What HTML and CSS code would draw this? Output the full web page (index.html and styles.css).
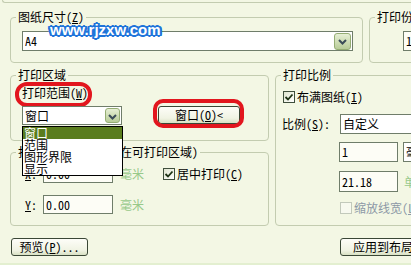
FILE: index.html
```html
<!DOCTYPE html>
<html>
<head>
  <meta charset="utf-8">
  <title>打印 - 模型</title>
  <link rel="stylesheet" href="styles.css">
</head>
<body>
  <div class="dialog">
    <div class="rim"></div>

    <div class="row row-top">
      <div class="group paper-group">
        <span class="group-title">图纸尺寸(<u>Z</u>)</span>
        <div class="combo combo-paper">
          <span class="combo-text">A4</span>
          <span class="drop-btn"><svg width="15" height="15" viewBox="0 0 15 15"><polyline points="4,6 7.5,9.5 11,6" fill="none" stroke="#3b4c58" stroke-width="2"/></svg></span>
        </div>
      </div>
      <div class="group copies-group">
        <span class="group-title">打印份数(<u>B</u>)</span>
        <div class="field copies-field">1</div>
      </div>
    </div>

    <div class="row row-mid">
      <div class="col-left">
        <div class="group area-group">
          <span class="group-title">打印区域</span>
          <div class="range-label"><span class="marked">打印范围(<u>W</u>)</span></div>
          <div class="range-row">
            <div class="combo combo-range">
              <span class="combo-text">窗口</span>
              <span class="drop-btn"><svg width="13" height="15" viewBox="0 0 13 15"><polyline points="3,6 6.5,9.5 10,6" fill="none" stroke="#3b4c58" stroke-width="2"/></svg></span>
              <ul class="drop-list">
                <li class="selected">窗口</li>
                <li>范围</li>
                <li>图形界限</li>
                <li>显示</li>
              </ul>
            </div>
            <button class="btn window-btn">窗口(<u>O</u>)&lt;</button>
          </div>
        </div>

        <div class="group offset-group">
          <span class="group-title">打印偏移(原点设置在可打印区域)</span>
          <div class="offset-row">
            <span class="axis"><u>X</u>:</span>
            <div class="field offset-field">0.00</div>
            <span class="unit">毫米</span>
            <span class="check-label center-check"><span class="check checked"><svg width="10" height="10" viewBox="0 0 10 10"><polyline points="1.5,5 4,7.5 8.5,2.5" fill="none" stroke="#1d3314" stroke-width="1.8"/></svg></span>居中打印(<u>C</u>)</span>
          </div>
          <div class="offset-row">
            <span class="axis"><u>Y</u>:</span>
            <div class="field offset-field">0.00</div>
            <span class="unit">毫米</span>
          </div>
        </div>
      </div>

      <div class="group scale-group">
        <span class="group-title">打印比例</span>
        <span class="check-label fit-check"><span class="check checked"><svg width="10" height="10" viewBox="0 0 10 10"><polyline points="1.5,5 4,7.5 8.5,2.5" fill="none" stroke="#1d3314" stroke-width="1.8"/></svg></span>布满图纸(<u>I</u>)</span>
        <div class="scale-row">
          <span class="scale-label">比例(<u>S</u>):</span>
          <div class="combo combo-scale"><span class="combo-text">自定义</span></div>
        </div>
        <div class="value-row">
          <div class="field value-field">1</div>
          <div class="combo combo-unit"><span class="combo-text">毫米</span></div>
        </div>
        <div class="value-row">
          <div class="field value-field value-tall">21.18</div>
          <span class="unit unit-label">单位(<u>N</u>)</span>
        </div>
        <span class="check-label lw-check disabled"><span class="check"></span>缩放线宽(<u>L</u>)</span>
      </div>
    </div>

    <div class="row row-bottom">
      <button class="btn preview-btn">预览(<u>P</u>)...</button>
      <button class="btn apply-btn">应用到布局(<u>T</u>)</button>
    </div>

    <div class="watermark">www.rjzxw.com</div>
  </div>
</body>
</html>
```

FILE: styles.css
```css
* {
    box-sizing: border-box;
}

body {
    margin: 0;
    background-color: #f3f7e4;
    color: #000;
    font-family: "Noto Sans CJK SC", sans-serif;
    font-size: 12px;
    line-height: 12px;
    font-feature-settings: "hwid";
}

u {
    text-decoration: underline;
    text-underline-offset: 1px;
}

.dialog {
    position: relative;
    width: 411px;
    height: 265px;
    overflow: hidden;
    border-bottom: 2px solid #e3efd0;
}

/* bottom of the group box above */
.rim {
    height: 3px;
    margin-left: 2px;
    border-left: 1px solid #c3ccb0;
    border-bottom: 1px solid #c3ccb0;
    border-bottom-left-radius: 4px;
}

.row {
    display: flex;
    padding-left: 10px;
}

.row-top {
    margin-top: 14px;
    gap: 6px;
}

.row-mid {
    margin-top: 12px;
    gap: 6px;
}

.row-bottom {
    margin-top: 12px;
    padding-left: 11px;
}

/* group boxes */
.group {
    border: 1px solid #c3ccb0;
    border-radius: 4px;
    flex-shrink: 0;
}

.group-title {
    display: block;
    width: fit-content;
    margin: -7px 0 0 5px;
    padding: 0 2px;
    background-color: #f3f7e4;
    white-space: nowrap;
}

.paper-group {
    width: 353px;
    height: 46px;
}

.copies-group {
    width: 110px;
    height: 46px;
}

.col-left {
    width: 259px;
    flex-shrink: 0;
}

.area-group {
    height: 66px;
}

.offset-group {
    margin-top: 11px;
    height: 74px;
}

.scale-group {
    width: 200px;
    height: 151px;
}

/* inputs */
.field,
.combo {
    display: flex;
    align-items: center;
    flex-shrink: 0;
    height: 20px;
    padding-left: 2px;
    border: 1px solid #6f7d6a;
    background-color: #fdfdf6;
    white-space: nowrap;
}

.combo {
    position: relative;
    background-color: #fff;
}

.drop-btn {
    display: flex;
    margin-left: auto;
    margin-right: 1px;
    border: 1px solid #95ad74;
    border-radius: 3px;
    background: linear-gradient(#e6efd4, #b8cc98);
}

.combo-paper {
    width: 331px;
    margin: 8px 0 0 11px;
}

.copies-field {
    width: 60px;
    margin: 8px 0 0 33px;
}

/* print area */
.range-label {
    margin: 6px 0 0 11px;
}

.marked {
    position: relative;
    display: inline-block;
}

.marked::after {
    content: "";
    position: absolute;
    top: -5px;
    bottom: -8px;
    left: -7px;
    right: -4px;
    border: 4px solid #e2161e;
    border-radius: 12px;
}

.range-row {
    display: flex;
    align-items: flex-start;
    margin: 7px 0 0 11px;
}

.combo-range {
    width: 100px;
    height: 19px;
}

.combo-range .drop-btn {
    height: 15px;
}

.drop-list {
    position: absolute;
    top: calc(100% + 2px);
    left: -1px;
    width: 101px;
    margin: 0;
    padding: 0;
    list-style: none;
    border: 1px solid #000;
    background-color: #fff;
    z-index: 2;
}

.drop-list li {
    height: 12px;
    padding-left: 1px;
    line-height: 12px;
}

.drop-list .selected {
    background-color: #5a7d1e;
    color: #fff;
}

/* buttons */
.btn {
    flex-shrink: 0;
    height: 18px;
    padding: 0;
    border: 1px solid #3a4736;
    border-radius: 3px;
    background: linear-gradient(#fdfdf8, #f0f3e3 70%, #d9e1c4);
    font: inherit;
    color: #000;
    white-space: nowrap;
}

.window-btn {
    position: relative;
    width: 82px;
    margin-left: 36px;
}

.window-btn::after {
    content: "";
    position: absolute;
    top: -8px;
    bottom: -5px;
    left: -6px;
    right: -5px;
    border: 4px solid #e2161e;
    border-radius: 10px;
}

.preview-btn {
    width: 77px;
}

.apply-btn {
    width: 104px;
    margin-left: 252px;
}

/* plot offset */
.offset-row {
    display: flex;
    align-items: center;
    height: 19px;
    margin-top: 6px;
    padding-left: 14px;
}

.offset-row + .offset-row {
    margin-top: 12px;
}

.axis {
    width: 18px;
}

.offset-field {
    width: 70px;
    height: 19px;
}

.unit {
    margin-left: 7px;
    color: #98c98a;
    white-space: nowrap;
}

.check-label {
    display: flex;
    align-items: center;
    white-space: nowrap;
}

.check {
    display: flex;
    align-items: center;
    justify-content: center;
    flex-shrink: 0;
    width: 12px;
    height: 12px;
    margin-right: 2px;
    border: 1px solid #3f4f3c;
    background: linear-gradient(135deg, #dfe5cf, #fff);
}

.center-check {
    margin-left: 19px;
}

/* plot scale */
.fit-check {
    margin: 10px 0 0 7px;
}

.scale-row {
    display: flex;
    align-items: center;
    margin: 11px 0 0 6px;
}

.scale-label {
    width: 58px;
    flex-shrink: 0;
    white-space: nowrap;
}

.combo-scale {
    width: 110px;
}

.value-row {
    display: flex;
    align-items: center;
    margin: 8px 0 0 63px;
}

.value-row + .value-row {
    margin-top: 9px;
}

.value-field {
    width: 59px;
}

.value-tall {
    height: 21px;
}

.combo-unit {
    width: 60px;
    margin-left: 5px;
}

.unit-label {
    margin-left: 6px;
}

.lw-check {
    margin: 10px 0 0 64px;
}

.disabled {
    color: #8d99a6;
}

.disabled .check {
    border-color: #c2c9bb;
    background: #f7f9ef;
}

/* site stamp over the screenshot */
.watermark {
    position: absolute;
    top: 21px;
    left: 50px;
    z-index: 3;
    font-family: "Liberation Sans", sans-serif;
    font-feature-settings: normal;
    font-size: 15px;
    line-height: 17px;
    font-weight: bold;
    color: #fff;
    text-shadow: 2px 0 #2074da, -2px 0 #2074da, 0 2px #2074da, 0 -2px #2074da,
        1px 1px #2074da, -1px 1px #2074da, 1px -1px #2074da, -1px -1px #2074da,
        2px 1px #2074da, -2px 1px #2074da, 2px -1px #2074da, -2px -1px #2074da;
}
```
